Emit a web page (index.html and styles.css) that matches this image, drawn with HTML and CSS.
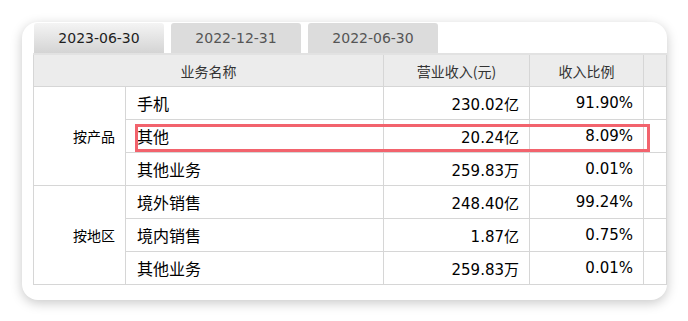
FILE: index.html
```html
<!DOCTYPE html>
<html>
<head>
<meta charset="utf-8">
<link rel="stylesheet" href="styles.css">
</head>
<body>
<div class="card">
  <div class="tabs">
    <div class="tab active">2023-06-30</div>
    <div class="tab">2022-12-31</div>
    <div class="tab">2022-06-30</div>
  </div>
  <div class="table-wrap">
    <table class="grid">
      <colgroup>
        <col class="c1"><col class="c2"><col class="c3"><col class="c4"><col class="c5">
      </colgroup>
      <thead>
        <tr>
          <th colspan="2">业务名称</th>
          <th>营业收入(元)</th>
          <th>收入比例</th>
          <th></th>
        </tr>
      </thead>
      <tbody>
        <tr>
          <td class="group" rowspan="3">按产品</td>
          <td class="name">手机</td>
          <td class="num">230.02亿</td>
          <td class="num">91.90%</td>
          <td></td>
        </tr>
        <tr>
          <td class="name">其他</td>
          <td class="num">20.24亿</td>
          <td class="num">8.09%</td>
          <td></td>
        </tr>
        <tr>
          <td class="name">其他业务</td>
          <td class="num">259.83万</td>
          <td class="num">0.01%</td>
          <td></td>
        </tr>
        <tr>
          <td class="group" rowspan="3">按地区</td>
          <td class="name">境外销售</td>
          <td class="num">248.40亿</td>
          <td class="num">99.24%</td>
          <td></td>
        </tr>
        <tr>
          <td class="name">境内销售</td>
          <td class="num">1.87亿</td>
          <td class="num">0.75%</td>
          <td></td>
        </tr>
        <tr>
          <td class="name">其他业务</td>
          <td class="num">259.83万</td>
          <td class="num">0.01%</td>
          <td></td>
        </tr>
      </tbody>
    </table>
    <div class="highlight"></div>
  </div>
</div>
</body>
</html>
```

FILE: styles.css
```css
html, body {
  margin: 0;
  padding: 0;
  background: #ffffff;
}
body {
  width: 688px;
  height: 321px;
  overflow: hidden;
  font-family: "DejaVu Sans", "Noto Sans CJK SC", sans-serif;
}
.card {
  margin: 22px 0 0 22px;
  width: 645px;
  height: 278px;
  box-sizing: border-box;
  background: #fff;
  border-radius: 16px;
  box-shadow: 0 3px 12px rgba(0, 0, 0, 0.22);
  padding: 1px 0 0 11px;
  overflow: hidden;
}
.tabs {
  display: flex;
  gap: 7px;
  height: 30px;
  padding-left: 1px;
}
.tab {
  width: 130px;
  height: 30px;
  box-sizing: border-box;
  background: #dcdcdc;
  border-radius: 3px 3px 0 0;
  color: #555;
  font-size: 14px;
  line-height: 31px;
  text-align: center;
}
.tab.active {
  background: linear-gradient(#f4f4f4, #d4d4d4);
  color: #1e1e1e;
}
.table-wrap {
  position: relative;
}
.grid {
  border-collapse: collapse;
  table-layout: fixed;
  width: 633px;
}
.c1 { width: 92px; }
.c2 { width: 258px; }
.c3 { width: 146px; }
.c4 { width: 114px; }
.c5 { width: 23px; }
.grid th, .grid td {
  border: 1px solid #d6d6d6;
  padding: 0;
}
.grid th {
  height: 31px;
  background: #ececec;
  font-family: "Noto Sans CJK SC", sans-serif;
  font-weight: 400;
  font-size: 14px;
  color: #333;
  text-align: center;
  border-top: 2px solid #e2e2e2;
}
.grid td {
  height: 32px;
  color: #000;
}
.group {
  text-align: right;
  padding-right: 10px !important;
  font-family: "Noto Sans CJK SC", sans-serif;
  font-size: 14px;
  color: #444;
}
.name {
  padding-left: 11px !important;
  font-family: "Noto Sans CJK SC", sans-serif;
  font-size: 16px;
  font-weight: 400;
  color: #000;
}
.num {
  text-align: right;
  padding-right: 10px !important;
  font-size: 15px;
  font-family: "DejaVu Sans", "Noto Sans CJK SC", sans-serif;
}
.highlight {
  position: absolute;
  left: 102px;
  top: 71px;
  width: 515px;
  height: 28px;
  box-sizing: border-box;
  border: 3px solid #f2636d;
  pointer-events: none;
}
```
